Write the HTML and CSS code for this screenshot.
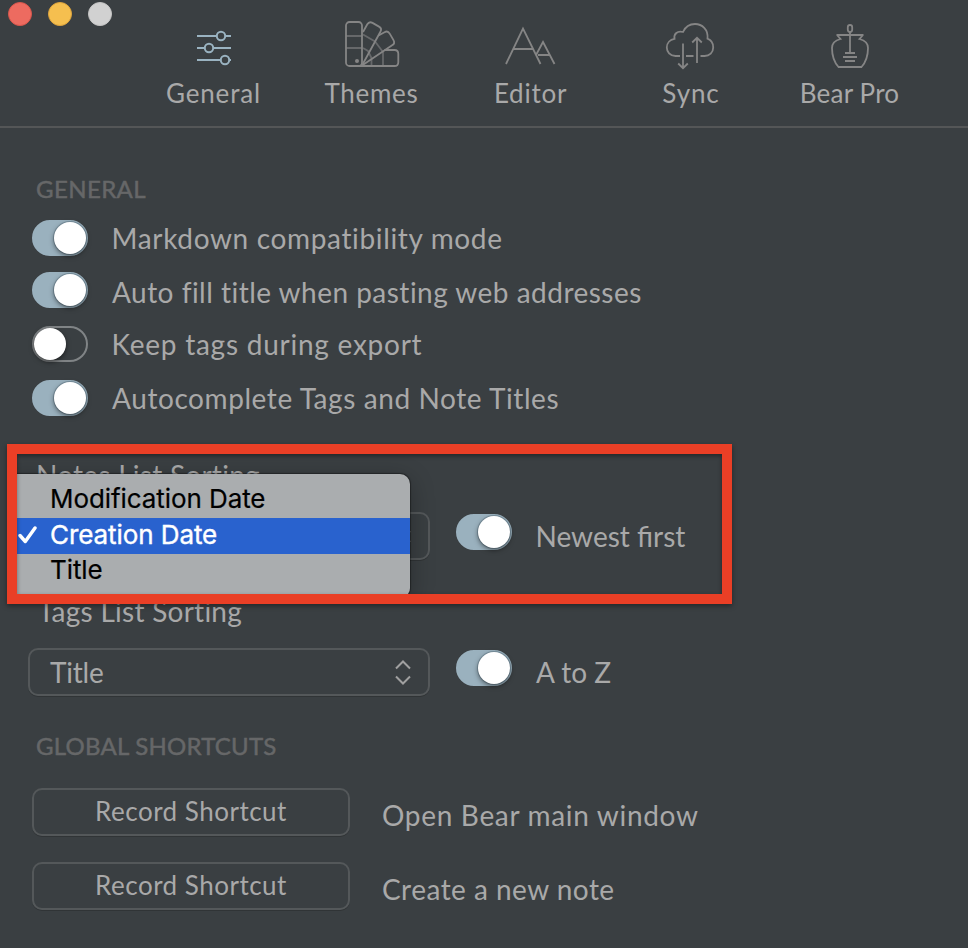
FILE: index.html
```
<!DOCTYPE html>
<html lang="en">
<head>
<meta charset="utf-8">
<title>General</title>
<link rel="stylesheet" href="styles.css">
</head>
<body>
<div class="window">
  <header class="toolbar">
    <div class="lights"><i class="light red"></i><i class="light yellow"></i><i class="light grey"></i></div>
    <nav class="tabs">
      <a class="tab active">
        <svg class="icon" viewBox="181 15 64 60"><path d="M197 36h19.500M225.500 36h5.500M197 48h7.500M213.500 48h17.500M197 60h23.500M229 60h2"/><circle cx="221" cy="36" r="4.200"/><circle cx="209" cy="48" r="4.200"/><circle cx="225" cy="60" r="4.200"/></svg>
        <span class="t-general">General</span>
      </a>
      <a class="tab">
        <svg class="icon" viewBox="339 15 64 60">
          <path class="dim" d="M346 36h16M346 48h16M363 34.500L375 41.500 383 52V66M363 48l5 3 3.500 7V66"/>
          <rect x="346" y="22" width="16" height="44" rx="3.500"/>
          <path d="M363 32l4.300-7.700q1.900-3.300 5.200-1.400l6.500 3.700q3.300 1.900 1.400 5.200L362 65.500"/>
          <path d="M378.500 35.500l6-3.300q3.300-1.900 5.200 1.400l3.800 6.500q1.900 3.300-1.400 5.200L362 65.500"/>
          <path d="M384.500 50H394.500q3.800 0 3.800 3.800V62.200q0 3.800-3.800 3.800H358"/>
          <circle class="dot" cx="357" cy="61" r="2"/>
        </svg>
        <span class="t-themes">Themes</span>
      </a>
      <a class="tab">
        <svg class="icon" viewBox="498 15 64 60"><path d="M506 64L523 28.500 540.500 64M513.500 49H533M536 55L543 42 554.500 64M538 55H549.500"/></svg>
        <span class="t-editor">Editor</span>
      </a>
      <a class="tab">
        <svg class="icon" viewBox="658 15 64 60"><path d="M680 56H675.500C670 56 666.800 52 666.800 47.500C666.800 43 670 39.500 674.500 38.800C673.500 34 677.500 30.300 683 32C685.500 26.500 690 24 695 24C702 24 708.500 29.500 707.500 38.700C711 40 713.200 43.500 713.200 47.500C713.200 52.500 709.500 56 704.500 56H700.500M686 56H693.500M683 43.500V68M678.200 63.500L683 68.200 687.800 63.500M697 63V38M692.200 42.500L697 37.800 701.800 42.500"/></svg>
        <span class="t-sync">Sync</span>
      </a>
      <a class="tab">
        <svg class="icon" viewBox="817 15 64 60"><rect x="847.800" y="25" width="4.400" height="7" rx="2.200"/><path d="M850 32V53M836.500 35H863.500M837 35L840.500 39C834.500 40.500 832 43 832 48C832 55.500 834 62 838.500 67H861.500C866 62 868 55.500 868 48C868 43 865.500 40.500 859.500 39L863 35M845 53H855M843 57H857M845 61H855"/></svg>
        <span class="t-pro">Bear Pro</span>
      </a>
    </nav>
  </header>

  <main class="content">
    <h2 class="heading h-general">GENERAL</h2>
    <section class="options">
      <div class="option"><span class="toggle on"></span><span class="label l-markdown">Markdown compatibility mode</span></div>
      <div class="option low tall"><span class="toggle on"></span><span class="label l-autofill">Auto fill title when pasting web addresses</span></div>
      <div class="option tall"><span class="toggle"></span><span class="label l-keep">Keep tags during export</span></div>
      <div class="option"><span class="toggle on"></span><span class="label l-complete">Autocomplete Tags and Note Titles</span></div>
    </section>

    <section class="sorting notes">
      <h3 class="subheading">Notes List Sorting</h3>
      <div class="sort-row">
        <div class="select"><span></span><svg class="chevrons" viewBox="0 0 18 26"><path d="M2 9.500L9 2.500 16 9.500M2 17.500L9 24.500 16 17.500"/></svg></div>
        <span class="toggle on"></span><span class="label l-newest">Newest first</span>
      </div>
      <div class="highlight-frame">
        <ul class="menu">
          <li class="m-mod">Modification Date</li>
          <li class="selected"><svg class="check" viewBox="0 0 20 18"><path d="M2 9.500L7.300 15.500 17 2"/></svg>Creation Date</li>
          <li class="m-title">Title</li>
        </ul>
      </div>
    </section>

    <section class="sorting tags">
      <h3 class="subheading">Tags List Sorting</h3>
      <div class="sort-row">
        <div class="select"><span class="value">Title</span><svg class="chevrons" viewBox="0 0 18 26"><path d="M2 9.500L9 2.500 16 9.500M2 17.500L9 24.500 16 17.500"/></svg></div>
        <span class="toggle on"></span><span class="label">A to Z</span>
      </div>
    </section>

    <h2 class="heading h-shortcuts">GLOBAL SHORTCUTS</h2>
    <section class="shortcuts">
      <div class="shortcut"><button class="record">Record Shortcut</button><span class="label l-open">Open Bear main window</span></div>
      <div class="shortcut"><button class="record">Record Shortcut</button><span class="label l-create">Create a new note</span></div>
    </section>
  </main>
</div>
</body>
</html>
```
FILE: styles.css
```
* { box-sizing: border-box; }
body { margin: 0; background: #3a3f42; font-family: Lato, "Open Sans", sans-serif; color: #a9a9a9; overflow: hidden; }
.window { height: 948px; background: #3a3f42; overflow: hidden; }
h2, h3, ul { margin: 0; padding: 0; font-weight: 400; }

.toolbar { position: relative; height: 128px; border-bottom: 2px solid #545657; }
.lights { position: absolute; left: 8px; top: 2px; display: flex; gap: 16px; }
.light { width: 24px; height: 24px; border-radius: 50%; border: 1px solid; }
.red { background: #ed6b60; border-color: #d9564c; }
.yellow { background: #f5bf4f; border-color: #dea43c; }
.grey { background: #d1d1d1; border-color: #c4c4c4; }
.tabs { display: grid; grid-template-columns: 158px 158px 160px 160px 158px; padding: 15px 0 0 134px; }
.tab { display: flex; flex-direction: column; align-items: center; }
.tab span { font-size: 26px; line-height: 32px; margin: 2px 0 0 1px; white-space: nowrap; }
.icon { width: 64px; height: 60px; fill: none; stroke: #858585; stroke-width: 1.800; }
.active .icon { stroke: #9ab3c1; stroke-width: 2; }
.icon .dim { stroke: #66686a; }
.icon .dot { fill: #858585; stroke: none; }
.t-general { letter-spacing: .85px; }
.t-themes { letter-spacing: .7px; }
.t-editor { letter-spacing: .75px; }
.tab .t-sync { letter-spacing: .89px; margin-left: 2px; }
.t-pro { letter-spacing: .19px; }

.content { padding: 45px 0 0 28px; }
.heading { padding-left: 8px; font-size: 24px; line-height: 32px; color: #666768; -webkit-text-stroke: .5px #666768; }
.h-general { letter-spacing: .4px; }
.h-shortcuts { letter-spacing: .24px; margin-top: 34px; }

.options { padding: 15px 0 0 4px; }
.option { display: flex; align-items: flex-start; height: 52px; }
.option.tall { height: 54px; }
.option .label { margin-left: 23.500px; margin-top: 2px; }
.option.low .label { margin-top: 4px; }
.label { font-size: 28px; line-height: 32px; white-space: nowrap; }
.l-markdown { letter-spacing: .65px; }
.l-autofill { letter-spacing: .48px; }
.l-keep { letter-spacing: .75px; }
.l-complete { letter-spacing: .58px; }
.l-open { letter-spacing: .68px; }
.l-create { letter-spacing: .47px; }
.option .l-autofill, .option .l-complete { margin-left: 24px; }

.toggle { flex: none; width: 56px; height: 36px; border-radius: 18px; border: 2px solid #808486; display: flex; }
.toggle::before { content: ""; width: 32px; height: 32px; border-radius: 50%; background: #fff; box-shadow: 0 2px 5px rgba(0, 0, 0, .5); }
.toggle.on { background: #9ab1be; border-color: #9ab1be; justify-content: flex-end; }
.toggle.on::before { box-shadow: 0 2px 5px rgba(0, 0, 0, .5), 0 0 0 1px rgba(70, 95, 112, .35); }

.sorting { position: relative; }
.notes { padding-top: 27px; height: 163px; }
.subheading { padding-left: 8px; font-size: 28px; line-height: 32px; letter-spacing: .26px; }
.sort-row { display: flex; align-items: flex-start; }
.notes .sort-row { margin-top: 21px; }
.select { width: 402px; height: 48px; border: 2px solid #54585a; border-radius: 10px; box-shadow: 0 1px 0 #303436; display: flex; align-items: center; justify-content: space-between; padding: 0 16px 0 20px; font-size: 28px; line-height: 32px; }
.chevrons { width: 18px; height: 26px; fill: none; stroke: #a0a0a0; stroke-width: 2; }
.sort-row .toggle { margin: 2px 0 0 26px; }
.sort-row .label { margin: 8px 0 0 24px; }
.sort-row .l-newest { margin-left: 23.500px; }

.highlight-frame { position: absolute; z-index: 2; left: -21px; top: 12px; width: 725px; height: 160px; border: 10px solid #ea3f26; overflow: hidden; box-shadow: 0 2px 5px rgba(0, 0, 0, .4); }
.highlight-frame::after { content: ""; position: absolute; inset: 0; box-shadow: inset 0 2px 4px rgba(0, 0, 0, .4); }
.menu { position: absolute; left: -12px; top: 20px; width: 405px; height: 124px; padding-top: 6px; list-style: none; background: #aaadaf; border-radius: 10px; box-shadow: 0 0 1px 1px rgba(0, 0, 0, .35), 0 6px 24px rgba(0, 0, 0, .3); color: #000; font-family: Inter, sans-serif; font-size: 26px; line-height: 36px; letter-spacing: -.08px; -webkit-text-stroke: .2px; }
.menu li { position: relative; height: 36px; padding-left: 45px; }
.menu .m-mod { height: 38px; line-height: 38px; }
.menu .m-title { line-height: 32px; }
.menu .selected { background: #2962ce; color: #fff; line-height: 33px; -webkit-text-stroke: .4px; }
.check { position: absolute; left: 13px; top: 8px; width: 20px; height: 18px; fill: none; stroke: #fff; stroke-width: 3.400; stroke-linecap: round; stroke-linejoin: round; }

.tags .subheading { padding-left: 10px; }
.tags .sort-row { margin-top: 21px; }
.value { letter-spacing: -.2px; }

.shortcuts { padding: 26px 0 0 4px; display: grid; gap: 26px; }
.shortcut { display: flex; }
.record { width: 318px; height: 48px; padding: 0 0 2px; border: 2px solid #54585a; border-radius: 10px; background: transparent; box-shadow: 0 1px 0 #303436; font: 26px/32px Lato, sans-serif; letter-spacing: .5px; color: #a9a9a9; }
.shortcut .label { margin: 11px 0 0 32px; }
```
